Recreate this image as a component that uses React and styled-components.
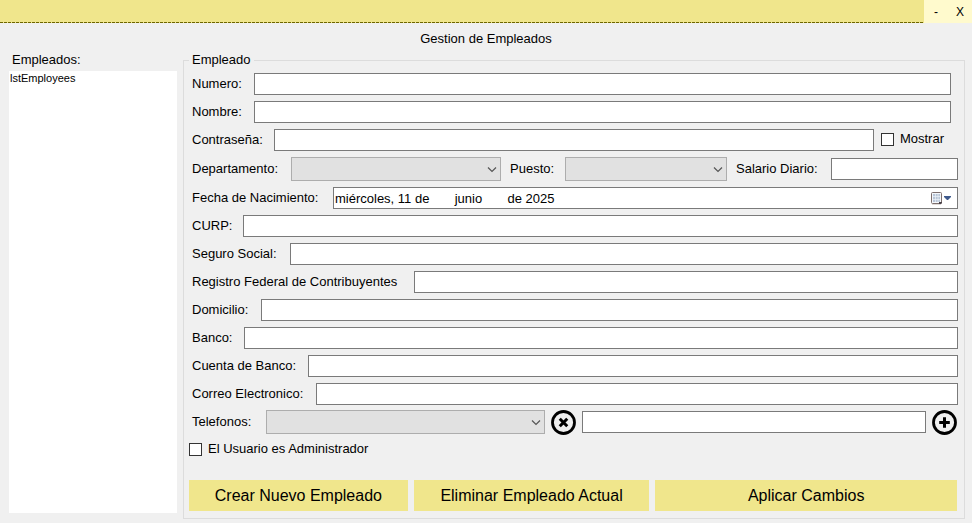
import React, { useState } from "react";
import styled, { createGlobalStyle } from "styled-components";

const Global = createGlobalStyle`
  *, *::before, *::after { box-sizing: border-box; }
  body { margin: 0; background: #f0f0f0; }
  body, button, input, select {
    font-family: "Liberation Sans", Arial, sans-serif;
    font-size: 13px;
    color: #000;
  }
`;

const Window = styled.div`
  min-height: 100vh;
  display: flex;
  flex-direction: column;
  background: #f0f0f0;
`;

const TitleBar = styled.header`
  display: flex;
  height: 23px;
  background: #f0e68c;
`;

const DragArea = styled.div`
  flex: 1;
  background: repeating-linear-gradient(90deg, #6e6600 0 3px, transparent 3px 4px) bottom / 100% 1px no-repeat;
`;

const WindowButton = styled.button`
  width: 24px;
  padding: 0;
  border: 0;
  background: #fffacd;
  font-size: 12px;
`;

const Title = styled.h1`
  margin: 8px 0 0;
  font-size: 13px;
  font-weight: normal;
  line-height: 16px;
  text-align: center;
`;

const Main = styled.main`
  flex: 1;
  display: flex;
  gap: 6px;
  padding: 5px 7px 4px 9px;
`;

const Sidebar = styled.section`
  display: flex;
  flex-direction: column;
  gap: 3px;
  width: 168px;
  padding-bottom: 6px;
`;

const ListLabel = styled.label`
  padding-left: 3px;
  line-height: 16px;
`;

const EmployeeList = styled.select`
  flex: 1;
  width: 100%;
  padding: 0;
  border: 0;
  border-radius: 0;
  background: #fff;
  outline: 0;
  option {
    min-height: 14px;
    padding: 1px 1px 0;
    font-size: 11px;
    line-height: 14px;
  }
`;

const Group = styled.fieldset`
  flex: 1;
  min-width: 0;
  margin: 0;
  padding: 5px 6px 7px 5px;
  border: 1px solid #dcdcdc;
`;

const Legend = styled.legend`
  padding: 0 3px;
  line-height: 16px;
`;

const Form = styled.form`
  display: flex;
  flex-direction: column;
  gap: 6px;
`;

const Row = styled.div`
  display: flex;
  align-items: center;
  gap: ${(p) => p.$gap || 0}px;
  height: ${(p) => p.$height || 22}px;
  padding-right: ${(p) => p.$inset || 0}px;
`;

const Field = styled.div`
  display: flex;
  align-items: center;
  flex: ${(p) => p.$grow || 1} 1 0;
  min-width: 0;
`;

const Label = styled.label`
  flex: 0 0 ${(p) => p.$width}px;
  padding-left: 3px;
  line-height: 16px;
  white-space: nowrap;
`;

const TextInput = styled.input`
  flex: 1;
  min-width: 0;
  height: 22px;
  padding: 0 2px;
  border: 1px solid #7a7a7a;
  border-radius: 0;
  background: #fff;
  outline: 0;
`;

const ComboWrap = styled.div`
  display: grid;
  flex: 1;
  align-items: center;
  min-width: 0;
  > * { grid-area: 1 / 1; }
  > svg { justify-self: end; margin-right: 4px; pointer-events: none; }
`;

const ComboSelect = styled.select`
  appearance: none;
  width: 100%;
  height: 24px;
  padding: 0 20px 0 3px;
  border: 1px solid #adadad;
  border-radius: 0;
  background: #e1e1e1;
`;

const DateBox = styled.div`
  display: flex;
  flex: 1;
  align-items: center;
  height: 22px;
  padding-right: 6px;
  border: 1px solid #7a7a7a;
  background: #fff;
`;

const DateInput = styled.input`
  flex: 1;
  min-width: 0;
  padding: 0 1px;
  border: 0;
  background: transparent;
  outline: 0;
`;

const IconButton = styled.button`
  display: flex;
  flex: none;
  padding: 0;
  border: 0;
  background: transparent;
`;

const CheckLabel = styled.label`
  display: flex;
  align-items: center;
  gap: 6px;
  padding-bottom: 2px;
  line-height: 16px;
  white-space: nowrap;
`;

const CheckBox = styled.input`
  appearance: none;
  width: 13px;
  height: 13px;
  margin: 0;
  border: 1px solid #333;
  background: #fff;
  &:checked { box-shadow: inset 0 0 0 2px #fff; background: #333; }
`;

const Actions = styled.div`
  display: grid;
  grid-template-columns: 219fr 236fr 302fr;
  gap: 6px;
  margin-top: 13px;
  padding-right: 1px;
`;

const ActionButton = styled.button`
  height: 31px;
  padding: 0;
  border: 0;
  background: #f0e68c;
  font-size: 16px;
`;

function Combo({ id }) {
  return (
    <ComboWrap>
      <ComboSelect id={id} />
      <svg width="10" height="7" viewBox="0 0 10 7" fill="none" stroke="#555" strokeWidth="1.2">
        <path d="M1 1.5 5 5.5 9 1.5" />
      </svg>
    </ComboWrap>
  );
}

function CircleIcon({ rotated }) {
  return (
    <svg width="25" height="25" viewBox="0 0 25 25" fill="none" stroke="#000">
      <circle cx="12.5" cy="12.5" r="11" strokeWidth="2.8" />
      <path
        d="M12.5 7.2v10.6M7.2 12.5h10.6"
        strokeWidth="3"
        transform={rotated ? "rotate(45 12.5 12.5)" : undefined}
      />
    </svg>
  );
}

function CalendarIcon() {
  return (
    <svg width="21" height="14" viewBox="0 0 21 14">
      <path d="M2 13.5h9" stroke="#dedad8" />
      <rect x="1.5" y="1.5" width="10" height="11" rx="1" fill="#f4f7fb" stroke="#7d6f6e" />
      <path d="M3 3h7v8H3z" fill="#b9c6d8" />
      <path d="M3 5.500h7M3 8.500h7M5.500 3v8M8 3v8" stroke="#edf2f8" strokeWidth=".7" />
      <path d="M9 13v-2h3v1l-1 1z" fill="#4b4248" />
      <path d="M14 5h7v1l-3 3h-1l-3-3z" fill="#3f5a8c" />
    </svg>
  );
}

function TextRow({ id, label, width, inset, type = "text" }) {
  return (
    <Row $inset={inset}>
      <Label htmlFor={id} $width={width}>{label}</Label>
      <TextInput id={id} type={type} />
    </Row>
  );
}

const detailFields = [
  { id: "curp", label: "CURP:", width: 54 },
  { id: "seguro", label: "Seguro Social:", width: 101 },
  { id: "rfc", label: "Registro Federal de Contribuyentes", width: 225 },
  { id: "domicilio", label: "Domicilio:", width: 72 },
  { id: "banco", label: "Banco:", width: 55 },
  { id: "cuenta", label: "Cuenta de Banco:", width: 119 },
  { id: "correo", label: "Correo Electronico:", width: 127 },
];

const birthDate = ["miércoles, 11 de", "junio", "de 2025"].join("\u00a0".repeat(7));

export default function App() {
  const [visible, setVisible] = useState(false);

  return (
    <Window>
      <Global />
      <TitleBar>
        <DragArea />
        <WindowButton type="button" aria-label="Minimizar">-</WindowButton>
        <WindowButton type="button" aria-label="Cerrar">X</WindowButton>
      </TitleBar>
      <Title>Gestion de Empleados</Title>
      <Main>
        <Sidebar>
          <ListLabel htmlFor="lista">Empleados:</ListLabel>
          <EmployeeList id="lista" size={10}>
            <option>lstEmployees</option>
          </EmployeeList>
        </Sidebar>
        <Group>
          <Legend>Empleado</Legend>
          <Form onSubmit={(e) => e.preventDefault()}>
            <TextRow id="numero" label="Numero:" width={65} inset={7} />
            <TextRow id="nombre" label="Nombre:" width={65} inset={7} />
            <Row $gap={7} $inset={14}>
              <Field>
                <Label htmlFor="clave" $width={85}>Contraseña:</Label>
                <TextInput id="clave" type={visible ? "text" : "password"} />
              </Field>
              <CheckLabel>
                <CheckBox type="checkbox" checked={visible} onChange={(e) => setVisible(e.target.checked)} />
                Mostrar
              </CheckLabel>
            </Row>
            <Row $gap={6} $height={24}>
              <Field $grow={312}>
                <Label htmlFor="departamento" $width={102}>Departamento:</Label>
                <Combo id="departamento" />
              </Field>
              <Field $grow={220}>
                <Label htmlFor="puesto" $width={58}>Puesto:</Label>
                <Combo id="puesto" />
              </Field>
              <Field $grow={225}>
                <Label htmlFor="salario" $width={98}>Salario Diario:</Label>
                <TextInput id="salario" type="text" />
              </Field>
            </Row>
            <Row>
              <Label htmlFor="fecha" $width={144}>Fecha de Nacimiento:</Label>
              <DateBox>
                <DateInput id="fecha" type="text" defaultValue={birthDate} />
                <IconButton type="button" aria-label="Abrir calendario"><CalendarIcon /></IconButton>
              </DateBox>
            </Row>
            {detailFields.map((f) => <TextRow key={f.id} {...f} />)}
            <Row $gap={6} $inset={1}>
              <Field $grow={356}>
                <Label htmlFor="telefonos" $width={77}>Telefonos:</Label>
                <Combo id="telefonos" />
              </Field>
              <IconButton type="button" aria-label="Eliminar telefono"><CircleIcon rotated /></IconButton>
              <Field $grow={344}>
                <TextInput type="text" aria-label="Nuevo telefono" />
              </Field>
              <IconButton type="button" aria-label="Agregar telefono"><CircleIcon /></IconButton>
            </Row>
            <Row>
              <CheckLabel>
                <CheckBox type="checkbox" />
                El Usuario es Administrador
              </CheckLabel>
            </Row>
            <Actions>
              <ActionButton type="button">Crear Nuevo Empleado</ActionButton>
              <ActionButton type="button">Eliminar Empleado Actual</ActionButton>
              <ActionButton type="submit">Aplicar Cambios</ActionButton>
            </Actions>
          </Form>
        </Group>
      </Main>
    </Window>
  );
}
